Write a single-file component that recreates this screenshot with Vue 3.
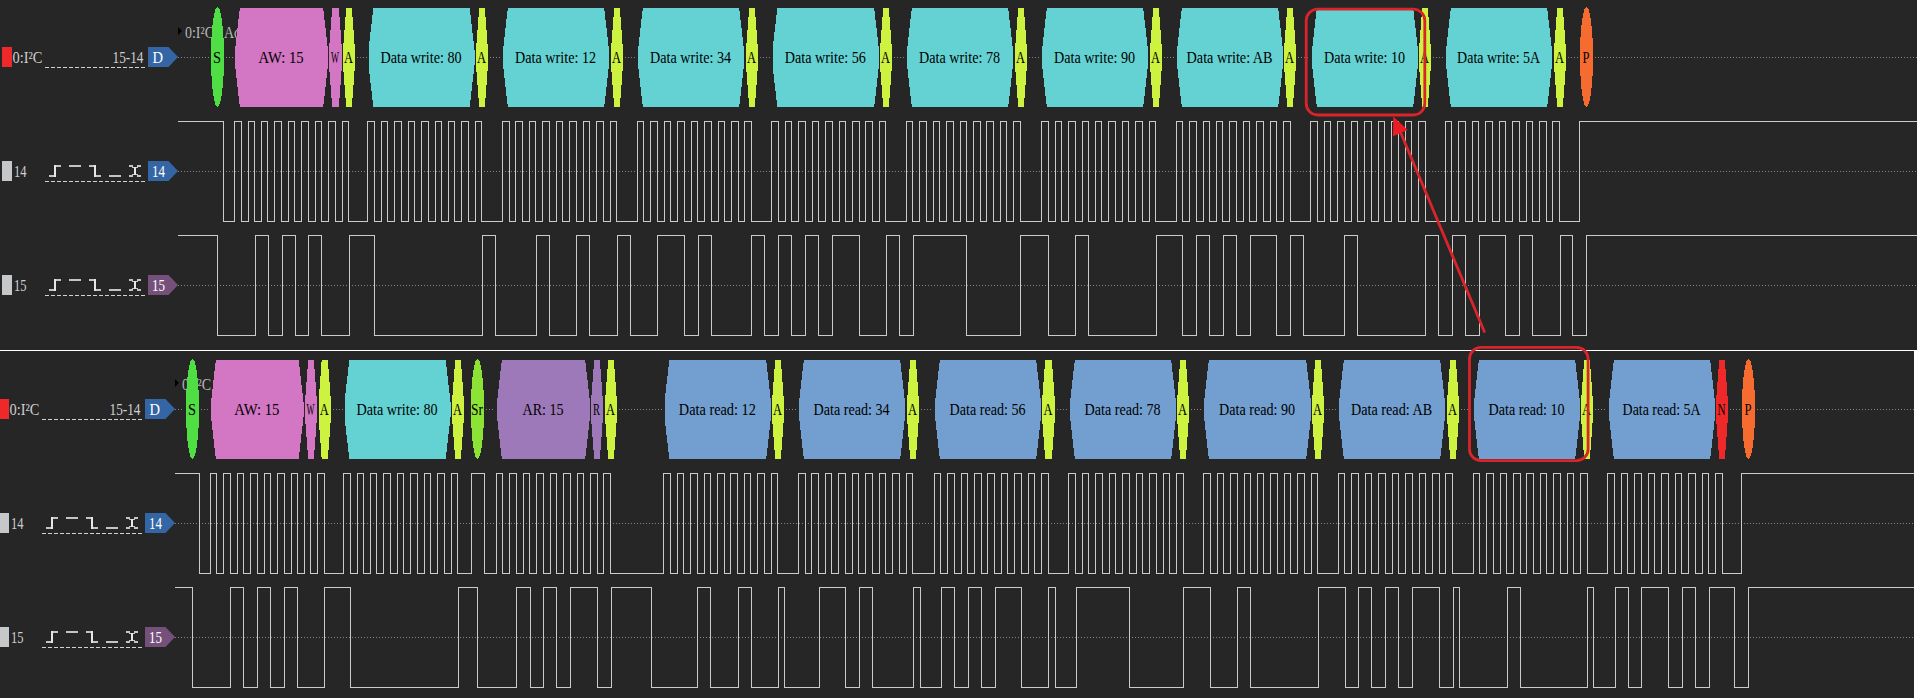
<script setup>
const palette = {
  S: '#4fde43', Sr: '#8ce335', AW: '#d376c3', AR: '#9e79b9',
  A: '#cdf23f', N: '#ef2929', P: '#f66b30', DW: '#64d2d3', DR: '#729fcf'
}

const block = (kind, text, x1, x2, tw) => {
  const round = ['S', 'Sr', 'P'].includes(kind)
  const slant = x2 - x1 > 20 ? 4.8 : 3.2
  const points = [
    [x1 + slant, 8], [x2 - slant, 8], [x2, 50], [x2, 65],
    [x2 - slant, 107], [x1 + slant, 107], [x1, 65], [x1, 50]
  ].map((p) => p.join(',')).join(' ')
  return { kind, text, x1, x2, tw, round, points, cx: (x1 + x2) / 2, fill: palette[kind] }
}

// Turns [edge, edge, ...] into a square wave that starts high.
const wave = (start, end, edges) => {
  let high = true
  let d = `M${start} 7.5`
  for (const e of edges) {
    high = !high
    d += `H${e + 0.5}V${high ? 7.5 : 107.5}`
  }
  return `${d}H${end}`
}

const gaps = (start, end, blocks) => {
  const out = []
  let from = start
  for (const b of blocks) {
    if (b.x1 - from > 5) out.push({ a: from, b: b.x1 - 2 })
    from = b.x2 + 2
  }
  out.push({ a: from, b: end })
  return out
}

const panel = (id, start, end, blocks, scl, sda, notes) => ({
  id, start, end, blocks, notes,
  gaps: gaps(start, end, blocks),
  waves: [
    { name: '14', tone: 'blue', d: wave(start, end, scl) },
    { name: '15', tone: 'purple', d: wave(start, end, sda) }
  ]
})

const panels = [
  panel('write', 178, 1917, [
    block('S', 'S', 211, 224, 8), block('AW', 'AW: 15', 235, 328, 45), block('AW', 'W', 329, 342, 8), block('A', 'A', 343, 355, 9),
    block('DW', 'Data write: 80', 368.5, 474.5, 81), block('A', 'A', 476, 488, 9),
    block('DW', 'Data write: 12', 503, 609, 81), block('A', 'A', 611, 623, 9),
    block('DW', 'Data write: 34', 638, 744, 81), block('A', 'A', 746, 758, 9),
    block('DW', 'Data write: 56', 772.5, 879, 81), block('A', 'A', 880, 892, 9),
    block('DW', 'Data write: 78', 907, 1013, 81), block('A', 'A', 1015, 1027, 9),
    block('DW', 'Data write: 90', 1042, 1148, 81), block('A', 'A', 1150, 1162, 9),
    block('DW', 'Data write: AB', 1177, 1283, 86), block('A', 'A', 1284, 1296, 9),
    block('DW', 'Data write: 10', 1312, 1418, 81), block('A', 'A', 1419, 1431, 9),
    block('DW', 'Data write: 5A', 1446, 1552, 83), block('A', 'A', 1554, 1566, 9),
    block('P', 'P', 1580, 1593, 7)
  ], [
    223, 234, 241, 248, 254, 261, 267, 274, 281, 288, 294, 301, 308, 315, 321, 328, 335, 342, 348,
    367, 374, 381, 387, 394, 401, 408, 414, 421, 428, 435, 441, 448, 454, 461, 468, 475, 481,
    502, 509, 515, 522, 529, 535, 542, 549, 556, 562, 569, 576, 583, 589, 596, 603, 610, 616,
    637, 643, 650, 657, 664, 670, 677, 684, 691, 697, 704, 711, 718, 724, 731, 738, 744, 751,
    771, 778, 785, 791, 798, 805, 812, 818, 825, 832, 839, 845, 852, 859, 865, 872, 879, 885,
    906, 912, 919, 926, 933, 939, 946, 953, 960, 966, 973, 980, 986, 993, 1000, 1006, 1013, 1020,
    1041, 1048, 1055, 1061, 1068, 1075, 1082, 1088, 1095, 1101, 1108, 1115, 1122, 1128, 1135, 1142, 1149, 1155,
    1176, 1182, 1189, 1196, 1203, 1209, 1216, 1222, 1229, 1236, 1243, 1249, 1256, 1263, 1270, 1276, 1283, 1290,
    1310, 1317, 1324, 1330, 1337, 1344, 1351, 1357, 1364, 1371, 1378, 1384, 1391, 1398, 1405, 1411, 1418, 1425,
    1445, 1451, 1458, 1465, 1472, 1478, 1485, 1492, 1499, 1505, 1512, 1519, 1526, 1532, 1539, 1546, 1552, 1559,
    1579
  ], [
    217, 255, 268, 282, 295, 308, 321, 349, 374, 482, 495, 536, 549, 576, 589, 617, 630, 657, 684, 698, 711,
    751, 764, 778, 791, 805, 818, 832, 859, 886, 899, 913, 966, 1020, 1048, 1075, 1088, 1156, 1182, 1196, 1209,
    1223, 1236, 1250, 1276, 1290, 1303, 1344, 1357, 1425, 1438, 1452, 1465, 1479, 1505, 1519, 1532, 1560, 1572, 1586
  ], [{ x: 185, text: '0:I²C', w: 29 }, { x: 224, text: 'Add', w: 24 }]),
  panel('read', 175, 1914, [
    block('S', 'S', 186, 199, 8), block('AW', 'AW: 15', 211, 303.5, 45), block('AW', 'W', 305, 317, 8), block('A', 'A', 318.5, 331, 9),
    block('DW', 'Data write: 80', 344.5, 450.5, 81), block('A', 'A', 452, 464, 9),
    block('Sr', 'Sr', 471, 484, 12),
    block('AR', 'AR: 15', 497, 590, 41), block('AR', 'R', 591, 603, 7), block('A', 'A', 605, 617, 9),
    block('DR', 'Data read: 12', 664.5, 771, 77), block('A', 'A', 772, 784, 9),
    block('DR', 'Data read: 34', 799, 905, 76), block('A', 'A', 907, 919, 9),
    block('DR', 'Data read: 56', 935, 1041, 76), block('A', 'A', 1042, 1055, 9),
    block('DR', 'Data read: 78', 1070, 1176, 76), block('A', 'A', 1177, 1189, 9),
    block('DR', 'Data read: 90', 1204, 1311, 76), block('A', 'A', 1312, 1324, 9),
    block('DR', 'Data read: AB', 1339, 1445, 81), block('A', 'A', 1447, 1459, 9),
    block('DR', 'Data read: 10', 1474, 1580, 76), block('A', 'A', 1581, 1593, 9),
    block('DR', 'Data read: 5A', 1609, 1715, 78), block('N', 'N', 1716, 1728, 8),
    block('P', 'P', 1742, 1755, 7)
  ], [
    199, 210, 216, 223, 230, 237, 243, 250, 257, 264, 270, 277, 284, 291, 297, 304, 310, 317, 324,
    343, 350, 357, 363, 370, 376, 383, 390, 397, 403, 410, 417, 424, 430, 437, 444, 451, 457, 471, 484,
    496, 502, 509, 516, 523, 529, 536, 543, 550, 556, 563, 570, 577, 583, 590, 597, 603, 610,
    663, 670, 677, 683, 690, 697, 704, 710, 717, 724, 730, 737, 744, 750, 757, 764, 771, 777,
    798, 805, 811, 818, 825, 831, 838, 845, 852, 858, 865, 872, 879, 885, 892, 899, 906, 912,
    934, 940, 947, 954, 961, 967, 974, 981, 987, 994, 1001, 1007, 1014, 1021, 1028, 1034, 1041, 1048,
    1068, 1075, 1082, 1088, 1095, 1102, 1109, 1115, 1122, 1129, 1136, 1142, 1149, 1156, 1163, 1169, 1176, 1183,
    1203, 1210, 1217, 1223, 1230, 1237, 1244, 1250, 1257, 1263, 1270, 1277, 1284, 1290, 1297, 1304, 1311, 1317,
    1338, 1344, 1351, 1358, 1365, 1371, 1378, 1385, 1392, 1398, 1405, 1412, 1419, 1425, 1432, 1439, 1445, 1452,
    1473, 1479, 1486, 1493, 1500, 1506, 1513, 1520, 1526, 1533, 1540, 1546, 1553, 1560, 1567, 1573, 1580, 1587,
    1607, 1614, 1621, 1627, 1634, 1641, 1648, 1654, 1661, 1668, 1675, 1681, 1688, 1695, 1702, 1708, 1715, 1722,
    1741
  ], [
    192, 230, 243, 257, 270, 284, 297, 324, 350, 458, 477, 516, 530, 543, 556, 570, 597, 611, 651, 697, 710,
    738, 751, 778, 784, 819, 845, 859, 872, 913, 920, 941, 954, 968, 981, 995, 1021, 1048, 1055, 1076, 1129,
    1183, 1210, 1237, 1250, 1318, 1345, 1358, 1371, 1385, 1398, 1412, 1439, 1453, 1459, 1507, 1520, 1587, 1593,
    1615, 1628, 1641, 1668, 1682, 1695, 1709, 1734, 1748
  ], [{ x: 182, text: '0:I²C', w: 29 }])
]
</script>

<template>
  <main class="analyzer">
    <section v-for="p in panels" :key="p.id" class="panel" :class="p.id">
      <div class="row">
        <div class="channel">
          <span class="swatch red"></span>
          <svg class="name" width="33" height="21"><text x="0.5" y="16" textLength="30" lengthAdjust="spacingAndGlyphs">0:I²C</text></svg>
          <svg class="triggers" width="100" height="21">
            <text x="67.5" y="16" textLength="31" lengthAdjust="spacingAndGlyphs">15-14</text>
            <path class="dash" d="M0 20.5H100" />
          </svg>
          <svg class="tag" width="30" height="20">
            <path class="blue" d="M0 0H20.5L30 10L20.5 20H0Z" />
            <text x="4.5" y="16" textLength="10.5" lengthAdjust="spacingAndGlyphs">D</text>
          </svg>
        </div>
        <svg class="plot" width="1739" height="114" :viewBox="`${p.start} 0 1739 114`">
          <path class="marker" :d="`M${p.start} 27L${p.start + 4} 31L${p.start} 35Z`" />
          <text v-for="n in p.notes" :key="n.x" class="note" :x="n.x" y="37.5" :textLength="n.w" lengthAdjust="spacingAndGlyphs">{{ n.text }}</text>
          <path v-for="g in p.gaps" :key="g.a" class="dots" :d="`M${g.a} 57.5H${g.b}`" />
          <g v-for="b in p.blocks" :key="b.x1">
            <ellipse v-if="b.round" class="shape" :cx="b.cx" cy="57" rx="6.5" ry="50" :fill="b.fill" />
            <polygon v-else class="shape" :points="b.points" :fill="b.fill" />
            <text class="value" :x="b.cx - 0.4" y="63" :textLength="b.tw" lengthAdjust="spacingAndGlyphs">{{ b.text }}</text>
          </g>
        </svg>
      </div>
      <div v-for="w in p.waves" :key="w.name" class="row">
        <div class="channel">
          <span class="swatch"></span>
          <svg class="name" width="33" height="21"><text x="2" y="15.5" textLength="12.5" lengthAdjust="spacingAndGlyphs">{{ w.name }}</text></svg>
          <svg class="triggers" width="100" height="21">
            <g class="glyph">
              <path d="M4 15H11M9 5H16M24 5H36M44 5H51M49 15H56M64 15H76" />
              <path d="M84 5H88M92 5H96M84 15H88M92 15H96" />
              <path class="thin" d="M87 6.5H93M87 13.5H93" />
              <path class="edge" d="M10 4V16M50 4V16M90 6V14" />
            </g>
            <path class="dash" d="M0 20.5H100" />
          </svg>
          <svg class="tag" width="30" height="20">
            <path :class="w.tone" d="M0 0H20.5L30 10L20.5 20H0Z" />
            <text x="4" y="15.5" textLength="13" lengthAdjust="spacingAndGlyphs">{{ w.name }}</text>
          </svg>
        </div>
        <svg class="plot" width="1739" height="114" :viewBox="`${p.start} 0 1739 114`">
          <path class="dots" :d="`M${p.start} 57.5H${p.end}`" />
          <path class="wave" :d="w.d" />
        </svg>
      </div>
    </section>

    <svg class="callouts" width="1917" height="698">
      <rect x="1306.2" y="9.2" width="118.6" height="105.8" rx="11.5" />
      <rect x="1469.5" y="347.3" width="118.6" height="113.4" rx="11.5" />
      <path d="M1484.3 331.5L1400 131" />
      <polygon points="1393.3,116.5 1393,136.3 1407.7,130" />
    </svg>
  </main>
</template>

<style>
body {
  margin: 0;
  background: #262626;
}
</style>

<style scoped>
.analyzer {
  position: relative;
  display: flex;
  flex-direction: column;
  width: 1917px;
  height: 698px;
  overflow: hidden;
  background: #262626;
  font-family: "Liberation Serif", serif;
  font-size: 16px;
}
.panel {
  box-sizing: border-box;
  overflow: hidden;
}
.panel.write {
  height: 350px;
}
.panel.read {
  height: 348px;
  padding-top: 1px;
  border-top: 1px solid #fff;
  border-right: 3px solid #fff;
}
.row {
  display: flex;
  height: 114px;
}
.read .row {
  margin-left: -3px;
}
.channel {
  box-sizing: border-box;
  display: flex;
  flex: none;
  align-items: flex-start;
  width: 178px;
  padding: 47px 0 0 2px;
}
.channel text {
  fill: #cfcfcf;
}
.swatch {
  flex: none;
  width: 10px;
  height: 20px;
  background: #c6c7c8;
}
.swatch.red {
  background: #ef2929;
}
.name,
.triggers,
.tag,
.plot {
  display: block;
  flex: none;
}
.name,
.triggers {
  overflow: visible;
}
.tag {
  margin-left: 3px;
}
.channel .tag text {
  fill: #fff;
}
.blue {
  fill: #3465a4;
}
.purple {
  fill: #75507b;
}
.dash {
  fill: none;
  stroke: #d2d2d2;
  stroke-dasharray: 4 2;
  shape-rendering: crispEdges;
}
.glyph path {
  fill: none;
  stroke: #c4c4c4;
  stroke-width: 2;
  shape-rendering: crispEdges;
}
.glyph .thin {
  stroke-width: 1;
}
.glyph .edge {
  stroke: #e6e6e6;
}
.marker {
  fill: #000;
}
.note {
  fill: #b8b8b8;
}
.dots {
  fill: none;
  stroke: #858585;
  stroke-dasharray: 1 2;
  shape-rendering: crispEdges;
}
.shape {
  shape-rendering: crispEdges;
}
.value {
  fill: #000;
  text-anchor: middle;
}
.wave {
  fill: none;
  stroke: #cbcbcb;
  shape-rendering: crispEdges;
}
.callouts {
  position: absolute;
  top: 0;
  left: 0;
}
.callouts rect,
.callouts path {
  fill: none;
  stroke: #d9242b;
  stroke-width: 2.8;
  stroke-linecap: round;
}
.callouts polygon {
  fill: #ec1c24;
}
</style>
